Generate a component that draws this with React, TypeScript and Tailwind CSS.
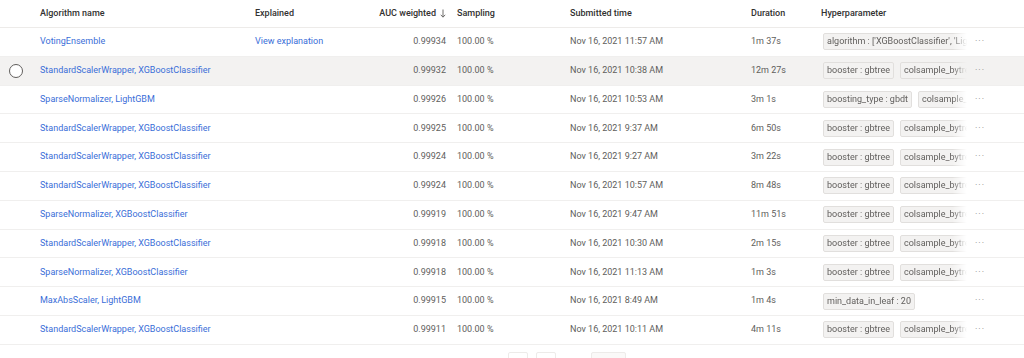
import React from "react";

type Run = {
  name: string;
  explained?: string;
  auc: string;
  duration: string;
  time: string;
  tags: string[];
  selected?: boolean;
};

const runs: Run[] = [
  { name: "VotingEnsemble", explained: "View explanation", auc: "0.99934", time: "Nov 16, 2021 11:57 AM", duration: "1m 37s", tags: ["algorithm : ['XGBoostClassifier', 'LightGBM']"] },
  { name: "StandardScalerWrapper, XGBoostClassifier", auc: "0.99932", time: "Nov 16, 2021 10:38 AM", duration: "12m 27s", tags: ["booster : gbtree", "colsample_bytree : 0.5"], selected: true },
  { name: "SparseNormalizer, LightGBM", auc: "0.99926", time: "Nov 16, 2021 10:53 AM", duration: "3m 1s", tags: ["boosting_type : gbdt", "colsample_bytree : 0.6"] },
  { name: "StandardScalerWrapper, XGBoostClassifier", auc: "0.99925", time: "Nov 16, 2021 9:37 AM", duration: "6m 50s", tags: ["booster : gbtree", "colsample_bytree : 0.5"] },
  { name: "StandardScalerWrapper, XGBoostClassifier", auc: "0.99924", time: "Nov 16, 2021 9:27 AM", duration: "3m 22s", tags: ["booster : gbtree", "colsample_bytree : 0.5"] },
  { name: "StandardScalerWrapper, XGBoostClassifier", auc: "0.99924", time: "Nov 16, 2021 10:57 AM", duration: "8m 48s", tags: ["booster : gbtree", "colsample_bytree : 0.5"] },
  { name: "SparseNormalizer, XGBoostClassifier", auc: "0.99919", time: "Nov 16, 2021 9:47 AM", duration: "11m 51s", tags: ["booster : gbtree", "colsample_bytree : 0.5"] },
  { name: "StandardScalerWrapper, XGBoostClassifier", auc: "0.99918", time: "Nov 16, 2021 10:30 AM", duration: "2m 15s", tags: ["booster : gbtree", "colsample_bytree : 0.5"] },
  { name: "SparseNormalizer, XGBoostClassifier", auc: "0.99918", time: "Nov 16, 2021 11:13 AM", duration: "1m 3s", tags: ["booster : gbtree", "colsample_bytree : 0.5"] },
  { name: "MaxAbsScaler, LightGBM", auc: "0.99915", time: "Nov 16, 2021 8:49 AM", duration: "1m 4s", tags: ["min_data_in_leaf : 20"] },
  { name: "StandardScalerWrapper, XGBoostClassifier", auc: "0.99911", time: "Nov 16, 2021 10:11 AM", duration: "4m 11s", tags: ["booster : gbtree", "colsample_bytree : 0.5"] },
];

function Row({ run }: { run: Run }) {
  return (
    <div
      className={
        "flex h-[28.8px] items-center border-b border-[#f0efee] text-[9px] text-[#605e5c] " +
        (run.selected ? "bg-[#f3f2f1]" : "bg-white")
      }
    >
      <div className="flex w-[40px] justify-center">
        {run.selected && (
          <span className="ml-[-8px] block h-[14px] w-[14px] rounded-full border border-[#605e5c] bg-white" />
        )}
      </div>
      <div className="w-[215px] whitespace-nowrap text-[#3a6ed8]">{run.name}</div>
      <div className="w-[95px] whitespace-nowrap text-[#3a6ed8]">{run.explained}</div>
      <div className="w-[96px] text-right">{run.auc}</div>
      <div className="w-[124px] pl-[11px]">100.00 %</div>
      <div className="w-[181px] whitespace-nowrap">{run.time}</div>
      <div className="w-[70px]">{run.duration}</div>
      <div className="flex w-[146px] gap-[6px] overflow-hidden pl-[2px] [mask-image:linear-gradient(to_right,black_90%,transparent)]">
        {run.tags.map((t) => (
          <span
            key={t}
            className="shrink-0 whitespace-nowrap rounded-[2px] border border-[#e1dfdd] bg-[#f3f2f1] px-[3px] leading-[15px] text-[#605e5c]"
          >
            {t}
          </span>
        ))}
      </div>
      <div className="ml-[8px] text-[9px] tracking-[1px] text-[#8a8886]">···</div>
    </div>
  );
}

export default function App() {
  return (
    <div className="h-[358px] w-[1024px] overflow-hidden bg-white font-['Roboto','Noto_Sans',sans-serif]">
      <div className="flex h-[28px] items-center border-b border-[#edebe9] text-[9px] font-medium text-[#323130]">
        <div className="w-[40px]" />
        <div className="w-[215px]">Algorithm name</div>
        <div className="w-[95px]">Explained</div>
        <div className="flex w-[96px] items-center justify-end gap-[4px]">
          AUC weighted
          <svg width="6" height="9" viewBox="0 0 6 9" className="text-[#605e5c]">
            <path d="M3 0.5V8M0.8 5.8L3 8.2L5.2 5.8" fill="none" stroke="currentColor" strokeWidth="0.9" />
          </svg>
        </div>
        <div className="w-[124px] pl-[11px]">Sampling</div>
        <div className="w-[181px]">Submitted time</div>
        <div className="w-[70px]">Duration</div>
        <div>Hyperparameter</div>
      </div>
      {runs.map((r, i) => (
        <Row key={i} run={r} />
      ))}
      <div className="flex pt-[7px] pl-[508px]">
        <span className="h-[20px] w-[20px] rounded-[2px] border border-[#edebe9]" />
        <span className="ml-[8px] h-[20px] w-[20px] rounded-[2px] border border-[#edebe9]" />
        <span className="ml-[35px] h-[20px] w-[35px] rounded-[2px] border border-[#edebe9] bg-[#faf9f8]" />
      </div>
    </div>
  );
}
